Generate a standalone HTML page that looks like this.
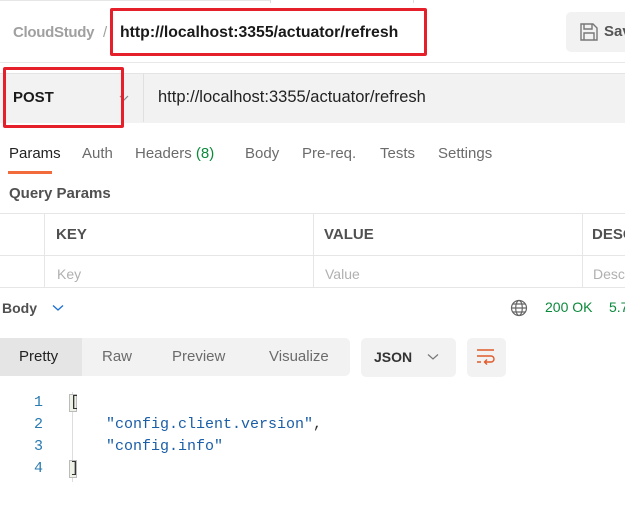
<!DOCTYPE html><html><head><style>
body{margin:0;width:625px;height:525px;background:#fff;font-family:"Liberation Sans",sans-serif;position:relative;overflow:hidden}
.a{position:absolute;white-space:nowrap}
.red{position:absolute;border:3px solid #e5202b;border-radius:2px;box-sizing:border-box}
</style></head><body>
<div class="a" style="left:0;top:0;width:270px;height:1px;background:#e6e6e6"></div>
<div class="a" style="left:270px;top:0;width:1px;height:3px;background:#ddd"></div>
<div class="a" style="left:413px;top:0;width:1px;height:3px;background:#ddd"></div>
<div class="a" style="left:13px;top:24px;font-size:15px;color:#a0a0a0;font-weight:bold;letter-spacing:-0.3px">CloudStudy</div>
<div class="a" style="left:103px;top:24px;font-size:15px;color:#a0a0a0">/</div>
<div class="a" style="left:120px;top:24px;font-size:15.8px;color:#1a1a1a;font-weight:bold">http://localhost:3355/actuator/refresh</div>
<div class="red" style="left:110px;top:8px;width:317px;height:48px"></div>
<div class="a" style="left:566px;top:12px;width:70px;height:40px;background:#f2f2f2;border-radius:5px"></div>
<svg class="a" style="left:579px;top:22px" width="20" height="20" viewBox="0 0 20 20"><path d="M2 2h12l4 4v12H2z M5 2v5h8V2 M5 18v-7h10v7" fill="none" stroke="#777" stroke-width="1.4"/></svg>
<div class="a" style="left:604px;top:23px;font-size:15px;color:#555;font-weight:bold">Sav</div>
<div class="a" style="left:0;top:62px;width:625px;height:1px;background:#e8e8e8"></div>
<div class="a" style="left:0;top:73px;width:625px;height:49px;background:#f2f2f2;border-top:1px solid #e4e4e4"></div>
<div class="a" style="left:143px;top:74px;width:1px;height:48px;background:#e0e0e0"></div>
<div class="a" style="left:13px;top:89px;font-size:15px;color:#1a1a1a;font-weight:bold">POST</div>
<svg class="a" style="left:119px;top:94px" width="10" height="8"><path d="M1 2l4 4 4-4" fill="none" stroke="#888" stroke-width="1.2"/></svg>
<div class="red" style="left:3px;top:67px;width:121px;height:61px"></div>
<div class="a" style="left:158px;top:88px;font-size:16.5px;color:#222">http://localhost:3355/actuator/refresh</div>
<div class="a" style="left:9px;top:145px;font-size:15px;color:#222">Params</div>
<div class="a" style="left:8px;top:171px;width:44px;height:3px;background:#f26b3a"></div>
<div class="a" style="left:82px;top:145px;font-size:15px;color:#6b6b6b">Auth</div>
<div class="a" style="left:135px;top:145px;font-size:15px;color:#6b6b6b">Headers <span style="color:#0b8a3c">(8)</span></div>
<div class="a" style="left:245px;top:145px;font-size:15px;color:#6b6b6b">Body</div>
<div class="a" style="left:302px;top:145px;font-size:15px;color:#6b6b6b">Pre-req.</div>
<div class="a" style="left:380px;top:145px;font-size:15px;color:#6b6b6b">Tests</div>
<div class="a" style="left:438px;top:145px;font-size:15px;color:#6b6b6b">Settings</div>
<div class="a" style="left:9px;top:185px;font-size:15px;color:#505050;font-weight:bold">Query Params</div>
<div class="a" style="left:0;top:213px;width:625px;height:1px;background:#e6e6e6"></div>
<div class="a" style="left:0;top:255px;width:625px;height:1px;background:#e6e6e6"></div>
<div class="a" style="left:0;top:287px;width:625px;height:1px;background:#e6e6e6"></div>
<div class="a" style="left:44px;top:213px;width:1px;height:74px;background:#e6e6e6"></div>
<div class="a" style="left:313px;top:213px;width:1px;height:74px;background:#e6e6e6"></div>
<div class="a" style="left:582px;top:213px;width:1px;height:74px;background:#e6e6e6"></div>
<div class="a" style="left:56px;top:226px;font-size:15px;color:#505050;font-weight:bold">KEY</div>
<div class="a" style="left:324px;top:226px;font-size:15px;color:#505050;font-weight:bold">VALUE</div>
<div class="a" style="left:592px;top:226px;font-size:15px;color:#505050;font-weight:bold">DESC</div>
<div class="a" style="left:57px;top:266px;font-size:14px;color:#b0b0b0">Key</div>
<div class="a" style="left:325px;top:266px;font-size:14px;color:#b0b0b0">Value</div>
<div class="a" style="left:593px;top:266px;font-size:14px;color:#b0b0b0">Desc</div>
<div class="a" style="left:2px;top:300px;font-size:14px;color:#505050;font-weight:bold">Body</div>
<svg class="a" style="left:52px;top:304px" width="12" height="8"><path d="M1 1.5l5 4.5 5-4.5" fill="none" stroke="#1a6fd6" stroke-width="1.3"/></svg>
<svg class="a" style="left:510px;top:299px" width="18" height="18" viewBox="0 0 18 18"><g fill="none" stroke="#666" stroke-width="1.2"><circle cx="9" cy="9" r="7.5"/><ellipse cx="9" cy="9" rx="3.3" ry="7.5"/><path d="M1.5 9h15M3 5h12M3 13h12"/></g></svg>
<div class="a" style="left:545px;top:299px;font-size:14px;color:#0b8a3c">200 OK</div>
<div class="a" style="left:609px;top:299px;font-size:14px;color:#0b8a3c">5.7</div>
<div class="a" style="left:0;top:338px;width:350px;height:38px;background:#f2f2f2;border-radius:0 5px 5px 0"></div>
<div class="a" style="left:0;top:338px;width:82px;height:38px;background:#e5e5e5"></div>
<div class="a" style="left:19px;top:348px;font-size:15px;color:#222">Pretty</div>
<div class="a" style="left:102px;top:348px;font-size:15px;color:#6b6b6b">Raw</div>
<div class="a" style="left:172px;top:348px;font-size:15px;color:#6b6b6b">Preview</div>
<div class="a" style="left:269px;top:348px;font-size:15px;color:#6b6b6b">Visualize</div>
<div class="a" style="left:361px;top:338px;width:95px;height:39px;background:#f2f2f2;border-radius:5px"></div>
<div class="a" style="left:374px;top:349px;font-size:14px;color:#333;font-weight:bold">JSON</div>
<svg class="a" style="left:427px;top:353px" width="12" height="8"><path d="M1 1.5l5 4.5 5-4.5" fill="none" stroke="#777" stroke-width="1.2"/></svg>
<div class="a" style="left:467px;top:338px;width:39px;height:39px;background:#f2f2f2;border-radius:5px"></div>
<svg class="a" style="left:476px;top:348px" width="20" height="18" viewBox="0 0 20 18"><g fill="none" stroke="#e05a2b" stroke-width="1.4"><path d="M1 2h17M1 8h14a3 3 0 0 1 0 6h-6M11 11.5l-2.5 2.5 2.5 2.5M1 14h4"/></g></svg>
<div class="a" style="left:72px;top:392px;width:1px;height:90px;background:#ddd"></div>
<div style="position:absolute;left:0;top:392px;font-family:'Liberation Mono',monospace;font-size:15px;line-height:22px">
<div class="a" style="left:34px;top:0;color:#2a7ab0">1</div>
<div class="a" style="left:34px;top:22px;color:#2a7ab0">2</div>
<div class="a" style="left:34px;top:44px;color:#2a7ab0">3</div>
<div class="a" style="left:34px;top:66px;color:#2a7ab0">4</div>
<div class="a" style="left:69px;top:2px;width:8px;height:18px;background:#eef2e6;border:1px solid #bbb;box-sizing:border-box"></div>
<div class="a" style="left:69px;top:68px;width:8px;height:18px;background:#eef2e6;border:1px solid #bbb;box-sizing:border-box"></div>
<div class="a" style="left:70px;top:0;color:#333">[</div>
<div class="a" style="left:106px;top:22px;color:#1a5ea8">"config.client.version"<span style="color:#333">,</span></div>
<div class="a" style="left:106px;top:44px;color:#1a5ea8">"config.info"</div>
<div class="a" style="left:70px;top:66px;color:#333">]</div>
</div>
</body></html>
